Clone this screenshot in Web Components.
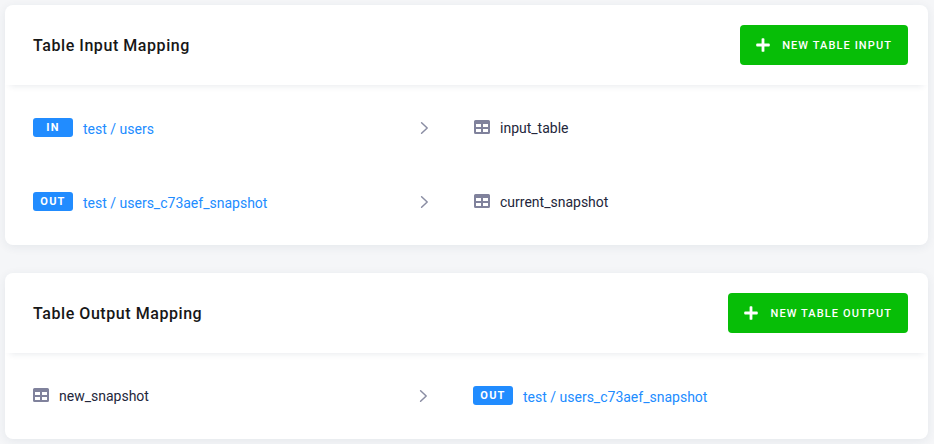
<!DOCTYPE html>
<html lang="en">
<head>
<meta charset="utf-8">
<title>Table Mapping</title>
<style>
html, body { margin: 0; height: 100%; overflow: hidden; }
body { background: #f5f6f8; font: 14px/20px Roboto, "Liberation Sans", sans-serif; color: #222529; }
main { display: flex; flex-direction: column; gap: 28px; padding: 5px 6px 5px 5px; }
</style>
</head>
<body>
<main>
  <mapping-card heading="Table Input Mapping" action="New Table Input">
    <mapping-row><bucket-link slot="from" stage="in">test / users</bucket-link><table-name slot="to">input_table</table-name></mapping-row>
    <mapping-row><bucket-link slot="from" stage="out">test / users_c73aef_snapshot</bucket-link><table-name slot="to">current_snapshot</table-name></mapping-row>
  </mapping-card>
  <mapping-card heading="Table Output Mapping" action="New Table Output">
    <mapping-row style="--from: 386px"><table-name slot="from">new_snapshot</table-name><bucket-link slot="to" stage="out">test / users_c73aef_snapshot</bucket-link></mapping-row>
  </mapping-card>
</main>
<script>
const define = (name, render) => customElements.define(name, class extends HTMLElement {
  constructor() {
    super();
    this.attachShadow({ mode: 'open' }).innerHTML = render(this);
  }
});

define('action-button', () => `
  <style>
    :host { display: block; }
    button { display: flex; align-items: center; gap: 12px; height: 40px; margin: 0; padding: 0 16px; border: 0; border-radius: 4px;
      background: #07be07; color: #fff; font: 500 11px/20px Roboto, "Liberation Sans", sans-serif; letter-spacing: 1.1px; text-transform: uppercase; white-space: nowrap; }
    svg { display: block; width: 14px; height: 14px; }
    span { padding-top: 2px; }
  </style>
  <button><svg viewBox="0 0 14 14" fill="#fff"><path d="M6.500.2h1q.9 0 .9.9v4.500h4.500q.9 0 .9.900v1q0 .9-.9.900H8.400v4.500q0 .9-.9.900h-1q-.9 0-.9-.9V8.400H1.100q-.9 0-.9-.9v-1q0-.9.9-.9h4.500V1.100q0-.9.9-.9z"/></svg><span><slot></slot></span></button>`);

define('mapping-card', el => `
  <style>
    :host { display: block; border-radius: 8px; background: #fff; box-shadow: 0 2px 10px rgba(34, 60, 90, .08); }
    header { display: flex; align-items: center; justify-content: space-between; height: 80px; padding: 0 20px 0 28px; box-sizing: border-box;
      border-radius: 8px 8px 0 0; box-shadow: 0 6px 6px -5px rgba(34, 50, 80, .1); }
    h2 { margin: 0; padding-top: 2px; color: #171717; font-size: 16px; line-height: 24px; font-weight: 500; letter-spacing: .56px; }
    section { padding: 6px 28px; }
  </style>
  <header><h2>${el.getAttribute('heading')}</h2><action-button>${el.getAttribute('action')}</action-button></header>
  <section><slot></slot></section>`);

define('mapping-row', () => `
  <style>
    :host { display: grid; grid-template-columns: var(--from, 387px) 54px 1fr; align-items: center; height: 74px; }
    svg { display: block; width: 9px; height: 14px; }
  </style>
  <slot name="from"></slot>
  <svg viewBox="0 0 9 14" fill="none" stroke="#8a8da3" stroke-width="1.5" stroke-linecap="round" stroke-linejoin="round"><path d="M1.600 1.700 7.200 7 1.600 12.300"/></svg>
  <slot name="to"></slot>`);

define('bucket-link', el => `
  <style>
    :host { display: flex; align-items: center; gap: 10px; }
    b { width: 40px; height: 19px; margin-bottom: 2px; border-radius: 3px; background: #218cff; color: #fff; font-size: 11px; line-height: 19px;
      font-weight: 700; letter-spacing: 1.2px; text-align: center; text-transform: uppercase; }
    a { color: #218cff; padding-top: 2px; white-space: nowrap; }
  </style>
  <b>${el.getAttribute('stage')}</b><a><slot></slot></a>`);

define('table-name', () => `
  <style>
    :host { display: flex; align-items: center; gap: 10px; color: #23263b; }
    svg { display: block; width: 16px; height: 14px; margin-bottom: 2px; }
  </style>
  <svg viewBox="0 0 16 14" fill="#80829c"><path fill-rule="evenodd" d="M1.500 0h13Q16 0 16 1.500v11q0 1.500-1.500 1.500h-13Q0 14 0 12.500v-11Q0 0 1.500 0zM2 4v3h5V4zM9 4v3h5V4zM2 9v3h5V9zM9 9v3h5V9z"/></svg>
  <span><slot></slot></span>`);
</script>
</body>
</html>
